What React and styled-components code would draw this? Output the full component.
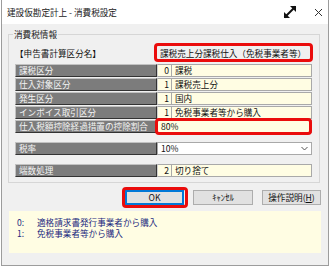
import React from "react";
import styled, { createGlobalStyle } from "styled-components";

const GlobalStyle = createGlobalStyle`
  html, body { margin: 0; padding: 0; background: #ffffff; }
  body { font-family: "Noto Sans CJK JP", "Noto Sans", sans-serif; font-size: 8.6px; color: #111; }
`;

const Window = styled.div`
  box-sizing: border-box;
  width: 328px;
  height: 266px;
  margin-left: 1px;
  border: 1px solid #9c9c9c;
  border-top: none;
  display: flex;
  flex-direction: column;
  background: #f0f0f0;
`;

const TitleBar = styled.div`
  height: 24px;
  background: #ffffff;
  display: flex;
  align-items: center;
  padding-left: 5px;
  padding-right: 5px;
`;

const Title = styled.span`
  flex: 1;
  font-size: 8.6px;
  color: #222;
`;

const TitleIcons = styled.div`
  display: flex;
  align-items: center;
  gap: 16px;
`;

const Body = styled.div`
  flex: 1;
  padding: 10px 6px 0 6px;
  display: flex;
  flex-direction: column;
`;

const Group = styled.div`
  position: relative;
  box-sizing: border-box;
  width: 312px;
  height: 149px;
  border: 1px solid #d6d6d6;
  padding: 10px 7px 0 6px;
`;

const GroupLabel = styled.span`
  position: absolute;
  top: -7px;
  left: 4px;
  padding: 0 1px;
  background: #f0f0f0;
  line-height: 13px;
  color: #222;
`;

const Grid = styled.div`
  display: grid;
  grid-template-columns: 142px 15px 140px;
  row-gap: 1px;
`;

const Header = styled.div`
  height: 16px;
  line-height: 16px;
  margin-bottom: 2px;
  color: #111;
  white-space: nowrap;
`;

const HeaderValue = styled.div`
  position: relative;
  grid-column: 2 / 4;
  height: 16px;
  line-height: 16px;
  padding-left: 3px;
  margin-bottom: 2px;
  white-space: nowrap;
  &::after {
    content: "";
    position: absolute;
    inset: -2px -1px -1px -3px;
    border: 3px solid #ea0c0c;
    border-radius: 4px;
  }
`;

const Label = styled.div`
  box-sizing: border-box;
  height: 13px;
  line-height: 11px;
  padding-left: 3px;
  background: #7c7c7c;
  color: #f4f4f4;
  border: 1px solid;
  border-color: #c2c2c2 #333 #333 #c2c2c2;
  white-space: nowrap;
  margin-top: ${(p) => (p.$gap ? "8px" : "0")};
`;

const Num = styled.div`
  box-sizing: border-box;
  height: 13px;
  line-height: 11px;
  text-align: right;
  padding-right: 2px;
  background: #fffde3;
  border: 1px solid #a9a9a9;
  border-left-color: #d0d0d0;
  margin-top: ${(p) => (p.$gap ? "8px" : "0")};
`;

const Value = styled.div`
  position: relative;
  box-sizing: border-box;
  height: 13px;
  line-height: 11px;
  padding-left: 3px;
  background: ${(p) => (p.$select ? "#ffffff" : "#fffde3")};
  border: 1px solid #a9a9a9;
  border-left: ${(p) => (p.$wide ? "1px solid #a9a9a9" : "none")};
  grid-column: ${(p) => (p.$wide ? "2 / 4" : "3")};
  margin-top: ${(p) => (p.$gap ? "8px" : "0")};
  display: flex;
  align-items: center;
  white-space: nowrap;
  ${(p) =>
    p.$marked &&
    `
    &::after {
      content: "";
      position: absolute;
      inset: -3px -1px -3px -3px;
      border: 3px solid #ea0c0c;
      border-radius: 4px;
    }
  `}
`;

const Chevron = styled.svg`
  margin-left: auto;
  margin-right: 3px;
`;

const ButtonRow = styled.div`
  display: flex;
  justify-content: flex-end;
  gap: 9px;
  margin-top: 7px;
  padding-right: 0;
  width: 313px;
`;

const Button = styled.button`
  position: relative;
  box-sizing: border-box;
  width: ${(p) => p.$w || 59}px;
  height: 15px;
  padding: 0;
  background: #e1e1e1;
  border: 1px solid ${(p) => (p.$focus ? "#0078d7" : "#adadad")};
  box-shadow: ${(p) => (p.$focus ? "inset 0 0 0 1px #0078d7" : "none")};
  font-family: "Noto Sans CJK JP", "Noto Sans", sans-serif;
  font-size: 8.6px;
  line-height: 13px;
  color: #111;
  ${(p) =>
    p.$marked &&
    `
    &::after {
      content: "";
      position: absolute;
      inset: -4px -5px -4px -4px;
      border: 3px solid #ea0c0c;
      border-radius: 4px;
    }
  `}
  u { text-decoration: underline; }
`;

const Info = styled.div`
  box-sizing: border-box;
  width: 312px;
  height: 42px;
  margin-top: 6px;
  margin-left: 1px;
  background: #fffde3;
  padding: 6px 0 0 8px;
  color: #1d2a80;
`;

const InfoLine = styled.div`
  display: flex;
  height: 11px;
  line-height: 11px;
`;

const InfoKey = styled.span`
  width: 20px;
`;

const rows = [
  { label: "課税区分", num: "0", value: "課税" },
  { label: "仕入対象区分", num: "1", value: "課税売上分" },
  { label: "発生区分", num: "1", value: "国内" },
  { label: "インボイス取引区分", num: "1", value: "免税事業者等から購入" },
];

export default function App() {
  return (
    <>
      <GlobalStyle />
      <Window>
        <TitleBar>
          <Title>建設仮勘定計上 - 消費税設定</Title>
          <TitleIcons>
            <svg width="16" height="16" viewBox="0 0 16 16">
              <path d="M2.5 13.5 L13.5 2.5" stroke="#111" strokeWidth="2" />
              <path d="M8 2 H14 V8 Z" fill="#111" />
              <path d="M2 8 V14 H8 Z" fill="#111" />
            </svg>
            <svg width="9" height="9" viewBox="0 0 9 9">
              <path d="M1 1 L8 8 M8 1 L1 8" stroke="#333" strokeWidth="1" />
            </svg>
          </TitleIcons>
        </TitleBar>
        <Body>
          <Group>
            <GroupLabel>消費税情報</GroupLabel>
            <Grid>
              <Header>【申告書計算区分名】</Header>
              <HeaderValue>課税売上分課税仕入（免税事業者等）</HeaderValue>
              {rows.map((r) => (
                <React.Fragment key={r.label}>
                  <Label>{r.label}</Label>
                  <Num>{r.num}</Num>
                  <Value>{r.value}</Value>
                </React.Fragment>
              ))}
              <Label>仕入税額控除経過措置の控除割合</Label>
              <Value $wide $marked>80%</Value>
              <Label $gap>税率</Label>
              <Value $wide $gap $select>
                10%
                <Chevron width="7" height="5" viewBox="0 0 7 5">
                  <path d="M0.5 1 L3.5 4 L6.5 1" fill="none" stroke="#555" strokeWidth="1" />
                </Chevron>
              </Value>
              <Label $gap>端数処理</Label>
              <Num $gap>2</Num>
              <Value $gap>切り捨て</Value>
            </Grid>
          </Group>
          <ButtonRow>
            <Button $focus $marked>OK</Button>
            <Button $w={60}>ｷｬﾝｾﾙ</Button>
            <Button>操作説明(<u>H</u>)</Button>
          </ButtonRow>
          <Info>
            <InfoLine>
              <InfoKey>0:</InfoKey>適格請求書発行事業者から購入
            </InfoLine>
            <InfoLine>
              <InfoKey>1:</InfoKey>免税事業者等から購入
            </InfoLine>
          </Info>
        </Body>
      </Window>
    </>
  );
}
